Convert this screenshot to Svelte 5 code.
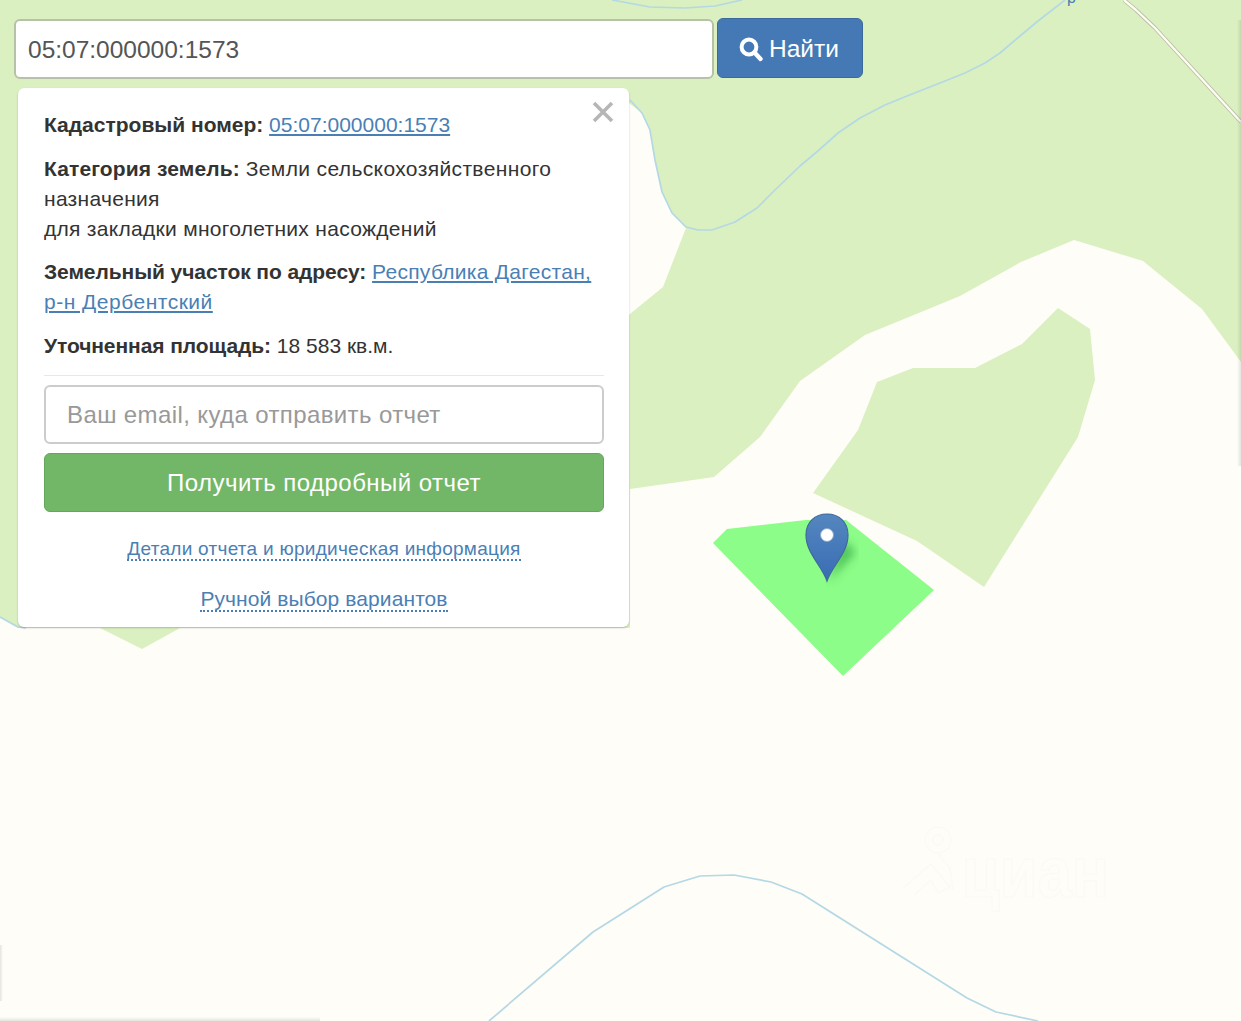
<script>
const forest = "0,0 1241,0 1241,362 1202,309 1143,261 1074,240 1021,262 960,296 865,335 800,381 760,437 714,477 630,489 630,628 180,628 142,649 100,628 18,628 0,617";
const clearing = "625,100 642,113 650,130 655,160 662,192 672,213 686,228 663,287 630,314 625,320";
const island = "813,493 858,430 877,382 913,368 975,368 1022,344 1058,308 1090,329 1095,380 1078,437 984,587 917,541";
const plot = "713,543 727,529 806,520 846,520 934,590 843,676";
const rivers = [
    "630,100 642,113 650,130 655,160 662,192 672,213 686,227 698,230 712,230 735,222 757,208 775,190 800,166 819,150 838,133 860,118 885,105 907,96 940,83 965,73 985,63 1000,53 1020,36 1038,21 1065,0",
    "612,0 650,7 685,8 715,6 742,0",
    "0,617 18,627 26,628",
    "489,1021 593,932 664,887 700,876 734,875 771,882 802,894 967,998 996,1012 1038,1021",
];
const road = "1124,0 1136,10 1155,28 1241,122";
</script>

<div class="page">
    <svg class="map" viewBox="0 0 1241 1021" width="1241" height="1021">
        <defs>
            <linearGradient id="pin-fill" x1="0" y1="0" x2="0" y2="1">
                <stop offset="0" stop-color="#5586bf" />
                <stop offset="1" stop-color="#386db4" />
            </linearGradient>
            <linearGradient id="edge-right" x1="0" y1="0" x2="1" y2="0">
                <stop offset="0" stop-color="#000" stop-opacity="0" />
                <stop offset="1" stop-color="#000" stop-opacity="0.1" />
            </linearGradient>
            <linearGradient id="edge-left" x1="0" y1="0" x2="1" y2="0">
                <stop offset="0" stop-color="#000" stop-opacity="0.1" />
                <stop offset="1" stop-color="#000" stop-opacity="0" />
            </linearGradient>
            <linearGradient id="edge-bottom" x1="0" y1="0" x2="0" y2="1">
                <stop offset="0" stop-color="#000" stop-opacity="0" />
                <stop offset="1" stop-color="#000" stop-opacity="0.1" />
            </linearGradient>
            <filter id="soft"><feGaussianBlur stdDeviation="5" /></filter>
        </defs>

        <polygon points={forest} fill="#daf0c0" />
        <polygon points={clearing} fill="#fefdf8" />
        <polygon points={island} fill="#daf0c0" />
        <polygon points={plot} fill="#8cfd88" />

        {#each rivers as river}
            <polyline points={river} fill="none" stroke="#b4d8e4" stroke-width="1.7" stroke-linejoin="round" />
        {/each}
        <polyline points={road} fill="none" stroke="#b9bba6" stroke-width="4" stroke-linejoin="round" />
        <polyline points={road} fill="none" stroke="#fefdf2" stroke-width="2.4" stroke-linejoin="round" />
        <text x="1067" y="3" class="river-name">р</text>

        <!-- watermark -->
        <g fill="none" stroke="#fbfaf4" stroke-width="1.5">
            <circle cx="938" cy="840" r="13" />
            <circle cx="938" cy="840" r="5" />
            <polyline points="903,888 931,864 950,887 938,893 931,880 914,895" />
            <polyline points="938,854 950,868 953,890" />
            <text x="962" y="897" class="watermark" textLength="147" lengthAdjust="spacingAndGlyphs">циан</text>
        </g>

        <!-- pin -->
        <polygon points="828,582 843,540 856,552" fill="#35a845" opacity="0.7" filter="url(#soft)" />
        <path d="M827 581 C822 566 806 553 806 535 C806 522 815 514 827 514 C839 514 848 522 848 535 C848 553 832 566 827 581 Z" fill="url(#pin-fill)" stroke="#3f6a99" stroke-width="1.2" />
        <circle cx="827" cy="535" r="6.5" fill="#fff" stroke="#8aa6c8" stroke-width="1" />

        <rect x="1237" y="20" width="4" height="446" fill="url(#edge-right)" />
        <rect x="0" y="945" width="3" height="56" fill="url(#edge-left)" />
        <rect x="0" y="1017" width="320" height="4" fill="url(#edge-bottom)" />
    </svg>

    <div class="ui">
        <form class="search">
            <input class="search-input" type="text" value="05:07:000000:1573" />
            <button class="search-btn" type="button">
                <svg width="24" height="25" viewBox="0 0 24 25">
                    <circle cx="10" cy="10" r="7.4" fill="none" stroke="#fff" stroke-width="4" />
                    <line x1="15.5" y1="15.5" x2="21.5" y2="22" stroke="#fff" stroke-width="4.4" stroke-linecap="round" />
                </svg>
                Найти
            </button>
        </form>

        <div class="card">
            <button class="close" type="button" aria-label="Закрыть">
                <svg width="22" height="22" viewBox="0 0 22 22">
                    <path d="M2 2 L20 20 M20 2 L2 20" stroke="#b6b6b6" stroke-width="3.6" fill="none" />
                </svg>
            </button>
            <p><b>Кадастровый номер:</b> <a href="#top">05:07:000000:1573</a></p>
            <p><b class="loose">Категория земель:</b> <span class="wider">Земли сельскохозяйственного</span> <span class="wide">назначения<br />для закладки многолетних насождений</span></p>
            <p><b class="tight">Земельный участок по адресу:</b> <a class="wide" href="#top">Республика Дагестан,</a> <a class="widest" href="#top">р-н Дербентский</a></p>
            <p><b class="tight">Уточненная площадь:</b> 18 583 кв.м.</p>
            <hr />
            <input class="email" type="text" placeholder="Ваш email, куда отправить отчет" />
            <button class="report" type="button">Получить подробный отчет</button>
            <div class="more small"><a href="#top">Детали отчета и юридическая информация</a></div>
            <div class="more"><a href="#top">Ручной выбор вариантов</a></div>
        </div>
    </div>
</div>

<style>
:global(body) {
    margin: 0;
}

.page {
    position: relative;
    width: 1241px;
    height: 1021px;
    overflow: hidden;
    background: #fefdf8;
    font-family: "Liberation Sans", Arial, sans-serif;
    font-size: 21px;
    line-height: 30px;
    color: #333;
}

.map {
    position: absolute;
    left: 0;
    top: 0;
}

.river-name {
    font-size: 16px;
    fill: #4a7fb5;
}

.watermark {
    font-size: 72px;
    font-weight: bold;
}

.ui {
    position: relative;
    padding: 18px 0 0 14px;
}

.search {
    display: flex;
    align-items: flex-start;
    gap: 3px;
    margin: 0;
}

.search-input {
    box-sizing: border-box;
    width: 700px;
    height: 60px;
    margin-top: 1px;
    padding: 2px 12px 0;
    border: 2px solid #b7c0a8;
    border-radius: 6px;
    background: #fff;
    font: 24.5px "Liberation Sans", Arial, sans-serif;
    color: #555;
}

.search-btn {
    display: flex;
    align-items: center;
    justify-content: center;
    gap: 6px;
    box-sizing: border-box;
    width: 146px;
    height: 60px;
    padding: 2px 2px 0 0;
    border: 1px solid #3c6a9c;
    border-radius: 6px;
    background: #4579b6;
    font: 24.5px "Liberation Sans", Arial, sans-serif;
    color: #fff;
}

.card {
    position: relative;
    box-sizing: border-box;
    width: 611px;
    height: 539px;
    margin: 9px 0 0 4px;
    padding: 22px 25px 0 26px;
    background: #fff;
    border-radius: 6px;
    box-shadow: 0 1px 2px rgba(0, 0, 0, 0.22);
}

.close {
    position: absolute;
    right: 15px;
    top: 13px;
    padding: 0;
    border: 0;
    background: none;
    line-height: 0;
}

p {
    margin: 0 0 13.7px;
}

.wide {
    letter-spacing: 0.29px;
}

.wider {
    letter-spacing: 0.37px;
}

.widest {
    letter-spacing: 0.5px;
}

.tight {
    letter-spacing: -0.08px;
}

.loose {
    letter-spacing: 0.12px;
}

a {
    color: #4a7fb5;
}

hr {
    height: 1px;
    margin: 0 0 9.2px;
    border: 0;
    background: #e8e8e8;
}

.email {
    display: block;
    box-sizing: border-box;
    width: 100%;
    height: 59px;
    padding: 2px 21px 0;
    border: 2px solid #ccc;
    border-radius: 6px;
    background: #fff;
    font: 24px "Liberation Sans", Arial, sans-serif;
    letter-spacing: 0.39px;
    color: #555;
}

.email::placeholder {
    color: #999;
    opacity: 1;
}

.report {
    display: block;
    box-sizing: border-box;
    width: 100%;
    height: 59px;
    margin-top: 9px;
    padding: 2px 0 0;
    border: 1px solid #63a75a;
    border-radius: 6px;
    background: #72b767;
    font: 24px "Liberation Sans", Arial, sans-serif;
    letter-spacing: 0.46px;
    color: #fff;
}

.more {
    margin-top: 20px;
    text-align: center;
    line-height: 30px;
    letter-spacing: 0.09px;
}

.more.small {
    margin-top: 22px;
    font-size: 19px;
    letter-spacing: 0.27px;
}

.more a {
    text-decoration: none;
    border-bottom: 2px dotted #4a7fb5;
}
</style>
